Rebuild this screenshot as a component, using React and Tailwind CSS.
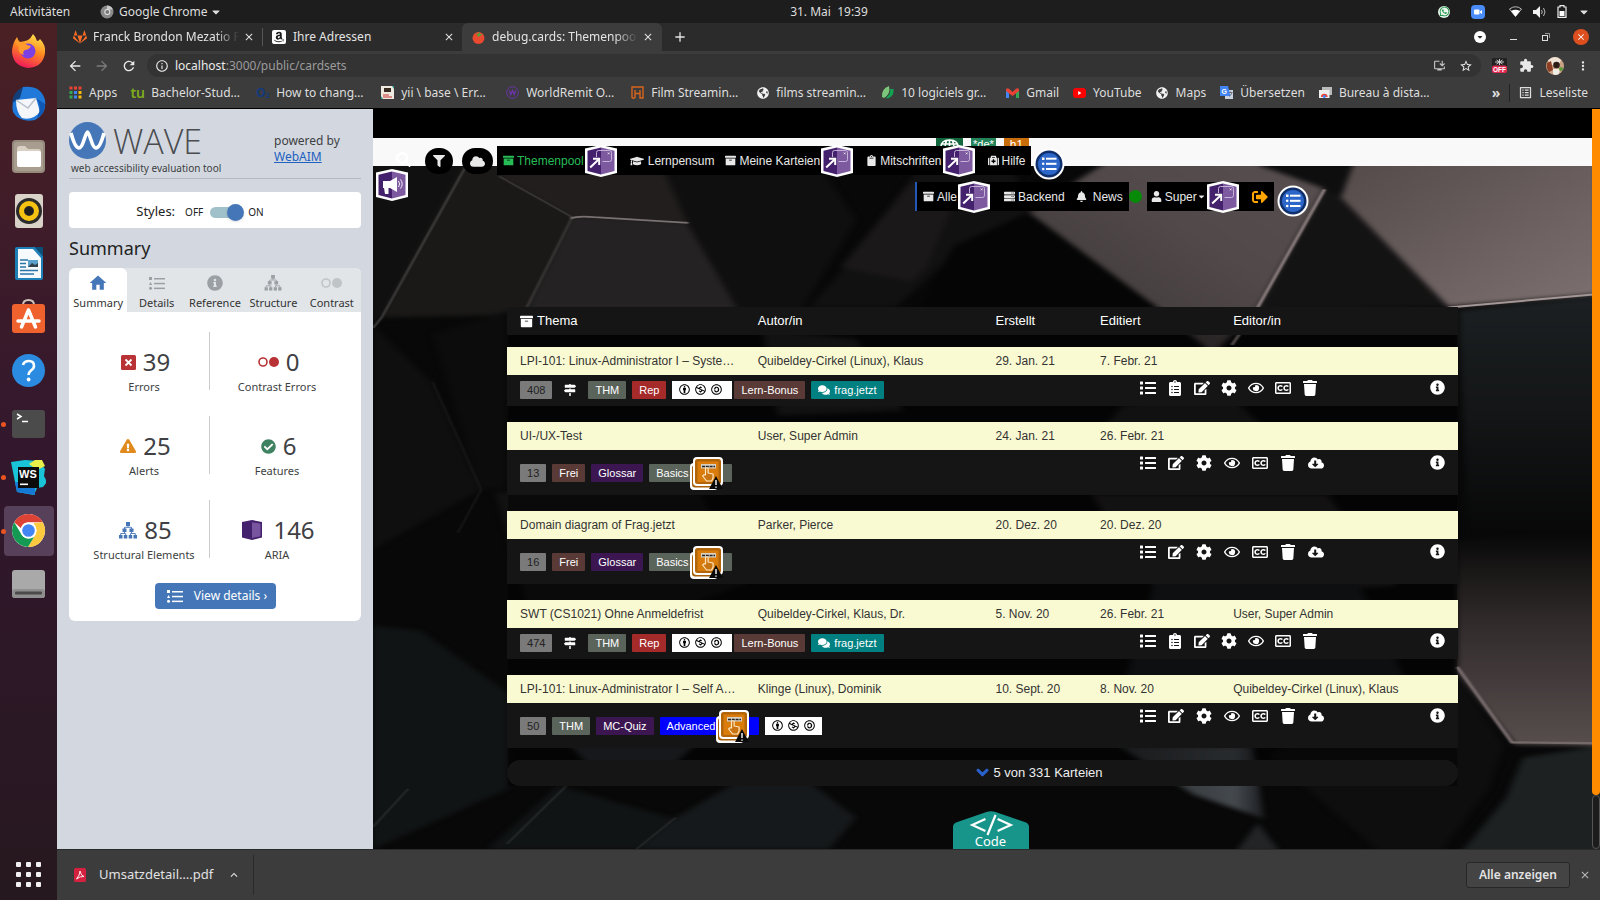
import React from "react";
import {
  FaArchive, FaGraduationCap, FaClipboard, FaMedkit, FaServer, FaBell, FaUser, FaSignOutAlt, FaFilter,
  FaCloud, FaSearch, FaMapSigns, FaComments, FaList, FaClipboardList, FaEdit, FaCog, FaRegEye,
  FaRegClosedCaptioning, FaTrash, FaCloudDownloadAlt, FaInfoCircle, FaChevronDown, FaCreativeCommonsBy,
  FaCreativeCommonsNc, FaCreativeCommonsSa, FaGlobeAmericas, FaCheckCircle, FaExclamationTriangle,
  FaGitlab, FaAmazon, FaWhatsapp, FaCaretDown,
} from "react-icons/fa";
import {
  MdArrowBack, MdArrowForward, MdRefresh, MdInfoOutline, MdStarBorder, MdInstallDesktop, MdExtension,
  MdMoreVert, MdClose, MdAdd, MdKeyboardArrowUp, MdOutlineListAlt, MdHome,
} from "react-icons/md";

/* ---------- shared badges ---------- */

function AriaBadge({ kind = "popup" }) {
  return (
    <svg viewBox="0 0 32 32" className="relative z-10 block size-8 shrink-0" aria-hidden="true">
      <path d="M0 3.500 16 0l16 3.500v24.500l-16 4-16-4z" fill="#fff" />
      <path d="M2.500 5.800 16 2.500v27L2.500 26z" fill="#44216c" />
      <path d="M16 2.500l13.500 3.300V26L16 29.500z" fill="#7d5a9f" />
      {kind === "popup" ? (
        <g fill="none" stroke="#fff">
          <path d="M11.500 12V7.500a2 2 0 0 1 2-2h11a2 2 0 0 1 2 2V14.500a2 2 0 0 1-2 2h-7" stroke="#cdbddf" strokeWidth=".9" />
          <path d="M22.800 7.500l1.800 1.800m0-1.800l-1.800 1.800" strokeWidth=".7" />
          <path d="M5.200 22.500l8.600-8.300" strokeWidth="2" />
          <path d="M8 13.800h6.200V20" strokeWidth="2" />
        </g>
      ) : (
        <g fill="#fff">
          <path d="M7 12h7l7-4v15l-7-4h-1.500v6H9l-1-6H7z" />
          <path d="M22.500 12a5 5 0 0 1 0 6M24.500 10.500a7 7 0 0 1 0 9" fill="none" stroke="#fff" strokeWidth=".9" />
        </g>
      )}
    </svg>
  );
}

function ListBadge() {
  return (
    <svg viewBox="0 0 32 32" className="block size-8 shrink-0" aria-hidden="true">
      <circle cx="16" cy="16" r="15.500" fill="#fff" />
      <circle cx="16" cy="16" r="13.500" fill="#0e2f6b" />
      <circle cx="16" cy="16" r="11" fill="#2b66c8" />
      <g fill="#fff">
        <rect x="9" y="9.500" width="2.500" height="2.500" />
        <circle cx="10.200" cy="15.800" r="1.300" />
        <circle cx="10.200" cy="21" r="1.300" />
        <rect x="13" y="9.700" width="10.500" height="2" />
        <rect x="13" y="14.800" width="10.500" height="2" />
        <rect x="13" y="20" width="10.500" height="2" />
      </g>
    </svg>
  );
}

function EventBadge() {
  return (
    <svg viewBox="0 0 33 34" className="-my-2 block h-[34px] w-[33px] shrink-0" aria-hidden="true">
      <rect x="0" y="7" width="28" height="27" rx="4" fill="#fff" />
      <rect x="2" y="9" width="24" height="22.500" rx="3" fill="#a75f08" />
      <rect x="3" y="1" width="30" height="29" rx="4" fill="#fff" />
      <rect x="5" y="3" width="26" height="25" rx="2.500" fill="#b3650a" />
      <rect x="7.500" y="5.500" width="21" height="20.500" fill="#d97c0c" />
      <rect x="11" y="8" width="15" height="4.500" fill="#d8d0c4" />
      <path d="M12 10.500h13" stroke="#222" strokeWidth="1.600" strokeDasharray="3 .8" />
      <path d="M15.500 19v-6.500q1.500-1.500 2.600 0V17l5 1v4l-1.500 3h-5l-4-5q1-1.600 2.900-1z" fill="#c87412" stroke="#ffe6bf" strokeWidth="1.200" strokeLinejoin="round" />
      <path d="M26 20l7 13H19z" fill="#0a0a0a" />
      <path d="M26 24v5M26 30.500v1.300" stroke="#fff" strokeWidth="1.400" />
    </svg>
  );
}

function ListGlyph({ className }) {
  return (
    <svg viewBox="0 0 16 13" className={className} fill="currentColor" aria-hidden="true">
      <rect x="0" y="0" width="3" height="3" />
      <path d="M1.500 5 3.200 8H0z" />
      <circle cx="1.500" cy="11.300" r="1.500" />
      <rect x="5" y="1" width="11" height="1.500" />
      <rect x="5" y="5.800" width="11" height="1.500" />
      <rect x="5" y="10.600" width="11" height="1.500" />
    </svg>
  );
}

function TreeGlyph({ className }) {
  return (
    <svg viewBox="0 0 18 17" className={className} fill="currentColor" aria-hidden="true">
      <rect x="7" y="0" width="4" height="4" />
      <rect x="3.500" y="6.500" width="4" height="3.500" />
      <rect x="10.500" y="6.500" width="4" height="3.500" />
      <rect x="0" y="13" width="3.500" height="3.500" />
      <rect x="4.800" y="13" width="3.500" height="3.500" />
      <rect x="9.700" y="13" width="3.500" height="3.500" />
      <rect x="14.500" y="13" width="3.500" height="3.500" />
      <path d="M9 4v1.500M5.500 7V5.300h7V7M5.500 10v1.500M12.500 10v1.500M1.700 13v-1.500h5V13M11.500 13v-1.500h4.800V13" fill="none" stroke="currentColor" strokeWidth=".9" />
    </svg>
  );
}

function ContrastGlyph({ className }) {
  return (
    <svg viewBox="0 0 21 10" className={className} aria-hidden="true">
      <circle cx="5" cy="5" r="4" fill="none" stroke="currentColor" strokeWidth="1.600" />
      <circle cx="16" cy="5" r="5" fill="currentColor" />
    </svg>
  );
}

/* ---------- desktop ---------- */

function TopBar() {
  return (
    <header className="relative flex h-[23px] shrink-0 items-center justify-between bg-[#1d1d1d] px-[10px] text-[12px] text-[#dedede]">
      <div className="flex items-center">
        <button type="button" className="w-[90px] text-left">Aktivitäten</button>
        <button type="button" className="flex items-center gap-[5px]">
          <svg viewBox="0 0 14 14" className="size-[14px]" aria-hidden="true">
            <circle cx="7" cy="7" r="6.500" fill="#8a8a8a" />
            <path d="M7 .5a6.500 6.500 0 0 1 6 4H7z" fill="#c9c9c9" />
            <circle cx="7.300" cy="7" r="3" fill="#e8e8e8" />
            <circle cx="7.300" cy="7" r="2" fill="#777" />
          </svg>
          <span className="-mr-[3px]">Google Chrome</span>
          <FaCaretDown className="size-3" />
        </button>
      </div>
      <time className="pointer-events-none absolute inset-x-0 mr-[-58px] text-center whitespace-pre">31. Mai  19:39</time>
      <div className="flex items-center gap-[11px]">
        <span className="mr-[10px] grid size-3 place-items-center rounded-full bg-[#e9f7ec]"><FaWhatsapp className="size-[11px] text-[#128c3e]" /></span>
        <svg viewBox="0 0 14 14" className="mr-[13px] size-[14px]" aria-hidden="true">
          <rect width="14" height="14" rx="4" fill="#4a8cf7" />
          <rect x="3" y="4.500" width="5.500" height="5" rx="1" fill="#fff" />
          <path d="M9 6.500 11 5v4L9 7.700z" fill="#fff" />
        </svg>
        <svg viewBox="0 0 13 11" className="h-[11px] w-[13px]" aria-hidden="true">
          <path d="M.5 3Q6.500-1.500 12.500 3L6.500 10.500z" fill="none" stroke="#bbb" />
          <path d="M2 5q4.500-2.500 9 0L6.500 10.500z" fill="#fff" />
        </svg>
        <svg viewBox="0 0 13 12" className="h-3 w-[13px]" aria-hidden="true">
          <path d="M0 4h3l4-4v12L3 8H0z" fill="#f2f2f2" />
          <path d="M8.500 4q1.500 2 0 4M10.500 2q3 4 0 8" stroke="#bbb" fill="none" />
        </svg>
        <svg viewBox="0 0 10 13" className="h-[13px] w-[10px]" aria-hidden="true">
          <path d="M1 2h2V.7h4V2h2v10.300H1z" fill="none" stroke="#eee" strokeWidth="1.200" />
          <rect x="2.500" y="6" width="5" height="5" fill="#fff" />
        </svg>
        <FaCaretDown className="size-3" />
      </div>
    </header>
  );
}

const dockIcons = {
  Firefox: (
    <>
      <defs>
        <linearGradient id="ff" x1=".7" y1="0" x2=".3" y2="1"><stop offset="0" stopColor="#ffe14d" /><stop offset=".45" stopColor="#ff8a1f" /><stop offset="1" stopColor="#f0135e" /></linearGradient>
      </defs>
      <path d="M22 1q3 3 4 7 2 0 3-2 6 6 5 14-2 14-17 15Q2 33 1 19 1 11 6 4q1 4 3 5 6-1 8-2 3-2 5-6z" fill="url(#ff)" />
      <circle cx="17" cy="18" r="7.500" fill="#7b3fe4" />
      <path d="M4 9q8-1 12 3l4 1q-2 4-6 4-3 2-1 5-7-2-5-8z" fill="#ff9a2e" />
    </>
  ),
  Thunderbird: (
    <>
      <path d="M12 1Q30-1 34 14q2 14-10 20Q8 37 2 26-1 12 12 1z" fill="#2079d8" />
      <path d="M12 1Q2 6 1 17l8-5z" fill="#123f7c" />
      <path d="M5 14l20-2 4 14q-8 9-18 6-6-6-6-18z" fill="#f4f6fa" />
      <path d="M5 14l12 8 8-10" fill="none" stroke="#b7bfcc" strokeWidth="1.500" />
      <path d="M25 12q7 8 1 20 8-4 8-14z" fill="#0f58b5" />
    </>
  ),
  Dateien: (
    <>
      <rect x="1" y="1" width="33" height="33" rx="4" fill="#958a7b" />
      <rect x="3" y="3" width="29" height="29" rx="3" fill="#a89d8e" />
      <path d="M6 10q0-3 3-3h5l3 3h10q3 0 3 3v13q0 2-2 2H8q-2 0-2-2z" fill="#d9d0c3" />
      <rect x="6" y="12" width="24" height="16" rx="2" fill="#fff" />
    </>
  ),
  Rhythmbox: (
    <>
      <rect x="4" y="1" width="28" height="34" rx="3" fill="#d8d2c8" />
      <circle cx="18" cy="18" r="13" fill="#2b2b2b" />
      <circle cx="18" cy="18" r="7.500" fill="none" stroke="#f5c211" strokeWidth="5" />
      <circle cx="18" cy="18" r="4" fill="#1e1e1e" />
    </>
  ),
  "LibreOffice Writer": (
    <>
      <path d="M6 1h18l8 9v22q0 2-2 2H6q-2 0-2-2V3q0-2 2-2z" fill="#1d7fb8" />
      <path d="M7 3h15l8 9v20H7z" fill="#f6fafc" />
      <path d="M24 1h8v9z" fill="#0b4f78" />
      <path d="M9 14h8M9 17.500h6M9 21h6M9 24.500h18M9 28h14" stroke="#2a76a8" strokeWidth="1.600" />
      <rect x="17" y="14" width="10" height="7" fill="#5aa1cb" />
      <path d="M17 21l4-4 3 2 3-2v4z" fill="#32424d" />
    </>
  ),
  "Ubuntu Software": (
    <>
      <path d="M12 6q0-5 5.500-5T23 6" fill="none" stroke="#cfc4bc" strokeWidth="2" />
      <rect x="1" y="5" width="33" height="29" rx="3" fill="#f0622d" />
      <path d="M17.500 11l-7 17M17.500 11l7 17M7 22h21" stroke="#fff" strokeWidth="3.500" fill="none" strokeLinecap="round" />
    </>
  ),
  Hilfe: (
    <>
      <circle cx="17.500" cy="17.500" r="16.500" fill="#2b8be0" />
      <path d="M12 12q1-4 6-4t5 5q0 2.500-3 4.500-2.500 2-2.500 4.500" fill="none" stroke="#fff" strokeWidth="2.600" />
      <circle cx="17.600" cy="26.500" r="1.900" fill="#fff" />
    </>
  ),
  Terminal: (
    <>
      <rect x="1" y="4" width="33" height="28" rx="3" fill="#4b4b4b" />
      <path d="M6 8l4 2.500L6 13M11 15.500h6" fill="none" stroke="#fff" strokeWidth="1.500" />
    </>
  ),
  WebStorm: (
    <>
      <path d="M0 2 14 0l14 1 6 8-1 7 3 6-4 5-6 1-3 7-17-3z" fill="#19c3d8" />
      <path d="M18 4 24 0h7l3 6-8 4z" fill="#e9f04a" />
      <path d="M4 22h20v13l-18-3z" fill="#1779d6" />
      <rect x="7" y="7" width="21" height="21" fill="#0c0c0c" />
      <text x="8" y="17.500" fontSize="11" fontWeight="700" fill="#fff" fontFamily="Liberation Sans, sans-serif">WS</text>
      <rect x="9" y="23.500" width="8" height="1.600" fill="#fff" />
    </>
  ),
  "Google Chrome": (
    <>
      <circle cx="17.500" cy="17.500" r="16.500" fill="#fff" />
      <path d="M3.200 9.300A16.500 16.500 0 0 1 31.800 9.300H17.500a8 8 0 0 0-7.500 6z" fill="#dd4335" />
      <path d="M31.800 9.300A16.500 16.500 0 0 1 17 34l7.500-12.500q2.500-6-2-11.500z" fill="#fdc93f" />
      <path d="M3.200 9.300A16.500 16.500 0 0 0 17 34l6-10q-8 4-12.500-2.500z" fill="#159a54" />
      <circle cx="17.500" cy="17.500" r="8" fill="#fff" />
      <circle cx="17.500" cy="17.500" r="6.300" fill="#4285f4" />
    </>
  ),
  Laufwerk: (
    <>
      <rect x="1" y="4" width="33" height="28" rx="3" fill="#a9a9a9" />
      <rect x="1" y="23" width="33" height="9" rx="3" fill="#8f8f8f" />
      <rect x="4" y="25.500" width="27" height="3" rx="1" fill="#4a4a4a" />
    </>
  ),
};

function Dock() {
  const running = ["Terminal", "WebStorm", "Google Chrome"];
  return (
    <nav aria-label="Dock" className="flex w-[57px] shrink-0 flex-col items-center justify-between bg-gradient-to-b from-[#4a2024] via-[#32172d] to-[#26181f] pt-[2px] pb-2">
      <ul className="flex h-[584px] flex-col justify-between">
        {Object.entries(dockIcons).map(([name, art]) => (
          <li key={name} className="relative">
            {running.includes(name) && <span className="absolute top-[23px] left-0 size-[5px] rounded-full bg-[#e95420]" />}
            <button type="button" aria-label={name} className={name === "Google Chrome" ? "mx-[3px] grid size-[50px] place-items-center rounded bg-[#57405a]" : "mx-[3px] grid size-[50px] place-items-center rounded"}>
              <svg viewBox="0 0 35 35" className="size-[35px]" aria-hidden="true">{art}</svg>
            </button>
          </li>
        ))}
      </ul>
      <button type="button" aria-label="Anwendungen anzeigen" className="grid size-9 grid-cols-3 place-items-center p-[3px]">
        {Array.from({ length: 9 }, (_, i) => <span key={i} className="size-[5px] rounded-[1px] bg-[#f3f0f2]" />)}
      </button>
    </nav>
  );
}

/* ---------- browser chrome ---------- */

function TabStrip() {
  return (
    <div className="flex h-7 shrink-0 items-center bg-[#2b2b2b] text-[12px] text-[#e3e3e3]">
      <div className="flex w-[206px] items-center border-r border-[#565656] pr-[7px] pl-4">
        <FaGitlab className="mr-[6px] size-[14px] shrink-0 text-[#fc6d26]" />
        <span className="mr-1 min-w-0 flex-1 overflow-hidden whitespace-nowrap [mask-image:linear-gradient(to_right,#000_84%,transparent)]">Franck Brondon Mezatio F</span>
        <button type="button" aria-label="Tab schließen"><MdClose className="size-3" /></button>
      </div>
      <div className="flex w-[199px] items-center pr-[7px] pl-[9px]">
        <span className="mr-[7px] grid size-[14px] place-items-center rounded-[2px] bg-white"><FaAmazon className="size-3 text-[#1b1b1b]" /></span>
        <span className="flex-1">Ihre Adressen</span>
        <button type="button" aria-label="Tab schließen"><MdClose className="size-3" /></button>
      </div>
      <div className="flex h-full w-[200px] items-center rounded-t-[6px] bg-[#3c3c3c] pr-2 pl-[10px]">
        <svg viewBox="0 0 13 13" className="mr-[7px] size-[13px] shrink-0" aria-hidden="true">
          <circle cx="6.500" cy="7" r="6" fill="#e8492f" />
          <path d="M3 2.500l3 .5L7.500.500 8 3l3 .5-3 1.200L6 6 5.500 4z" fill="#4fa33a" />
        </svg>
        <span className="mr-1 min-w-0 flex-1 overflow-hidden whitespace-nowrap [mask-image:linear-gradient(to_right,#000_84%,transparent)]">debug.cards: Themenpoo</span>
        <button type="button" aria-label="Tab schließen"><MdClose className="size-3" /></button>
      </div>
      <button type="button" aria-label="Neuer Tab" className="ml-[10px]"><MdAdd className="size-4" /></button>
      <div className="ml-auto flex items-center gap-[21px] pr-[11px]">
        <button type="button" aria-label="Tabs suchen" className="grid size-3 place-items-center rounded-full bg-white text-[#2b2b2b]"><FaCaretDown className="size-2" /></button>
        <button type="button" aria-label="Minimieren" className="grid size-3 place-items-center"><span className="mt-1 h-px w-[7px] bg-[#ddd]" /></button>
        <button type="button" aria-label="Wiederherstellen">
          <svg viewBox="0 0 12 12" className="size-3" fill="none" stroke="#ddd" aria-hidden="true"><rect x="2.500" y="4.500" width="5" height="5" /><path d="M5 2.500h4.500V7" stroke="#999" /></svg>
        </button>
        <button type="button" aria-label="Fenster schließen" className="grid size-4 place-items-center rounded-full bg-[#dd4f1e] text-white"><MdClose className="size-[10px]" /></button>
      </div>
    </div>
  );
}

function Toolbar() {
  return (
    <div className="flex h-[26px] shrink-0 items-center bg-[#3c3c3c] pt-[3px] text-[#e8e8e8]">
      <div className="flex w-[90px] items-center gap-[11px] pl-[10px]">
        <button type="button" aria-label="Zurück"><MdArrowBack className="size-4" /></button>
        <button type="button" aria-label="Vorwärts"><MdArrowForward className="size-4 text-[#7b7b7b]" /></button>
        <button type="button" aria-label="Neu laden"><MdRefresh className="size-4" /></button>
      </div>
      <div className="flex h-[23px] flex-1 items-center rounded-full bg-[#333] px-2 text-[12px]">
        <MdInfoOutline className="mr-[6px] size-[14px]" />
        <span className="flex-1 text-[#9b9b9b]"><span className="text-[#ececec]">localhost</span>:3000/public/cardsets</span>
        <button type="button" aria-label="App installieren" className="mr-[13px]"><MdInstallDesktop className="size-[13px] text-[#c8c8c8]" /></button>
        <button type="button" aria-label="Lesezeichen"><MdStarBorder className="size-[14px]" /></button>
      </div>
      <div className="flex items-center gap-[12px] pr-[10px] pl-[11px]">
        <button type="button" aria-label="Erweiterung aus">
          <svg viewBox="0 0 15 15" className="size-[15px]" aria-hidden="true">
            <rect width="15" height="9" rx="1" fill="#222" />
            <path d="M7.500 1v6M4.500 2l6 4M10.500 2l-6 4M3 4h9" stroke="#ddd" strokeWidth=".9" />
            <rect y="7.500" width="15" height="7.500" rx="2" fill="#e22a53" />
            <text x="7.500" y="13.600" textAnchor="middle" fontSize="6.500" fontWeight="700" fill="#fff" fontFamily="Liberation Sans, sans-serif">OFF</text>
          </svg>
        </button>
        <button type="button" aria-label="Erweiterungen"><MdExtension className="size-[15px]" /></button>
        <button type="button" aria-label="Profil">
          <svg viewBox="0 0 18 18" className="size-[18px]" aria-hidden="true">
            <circle cx="9" cy="9" r="9" fill="#c9a184" />
            <path d="M2 3.500Q9-3 15 3l-2 5H5z" fill="#efe3d6" />
            <path d="M1 6l4-2 2 9-4 2Q0 11 1 6z" fill="#8d3f26" />
            <circle cx="10.500" cy="8" r="3.300" fill="#2b1d18" />
            <path d="M7 12h7l-1 5q-4 2-6 0z" fill="#f0ece6" />
            <circle cx="15" cy="12" r="2" fill="#5c9a3c" />
          </svg>
        </button>
        <button type="button" aria-label="Menü"><MdMoreVert className="size-[14px]" /></button>
      </div>
    </div>
  );
}

const bookmarks = [
  { label: "Apps", icon: (
    <svg viewBox="0 0 13 13" className="size-[13px]" aria-hidden="true">
      {["#ea4335", "#ea4335", "#ea4335", "#34a853", "#4285f4", "#fbbc04", "#34a853", "#4285f4", "#fbbc04"].map((c, i) => (
        <rect key={i} x={(i % 3) * 4.500 + 0.500} y={Math.floor(i / 3) * 4.500 + 0.500} width="3" height="3" fill={c} />
      ))}
    </svg>
  ) },
  { label: "Bachelor-Stud…", wide: true, icon: <span className="text-[14px] leading-none font-semibold text-[#7fae1b]">tu</span> },
  { label: "How to chang…", wide: true, icon: <span className="text-[12px] leading-none font-bold text-[#123a7c]">O<sub className="text-[7px]">2</sub></span> },
  { label: "yii \\ base \\ Err…", wide: true, icon: (
    <svg viewBox="0 0 13 13" className="size-[13px]" aria-hidden="true"><rect width="13" height="13" fill="#efe9e0" /><path d="M3 2h7v4H3z" fill="#3a2b22" /><path d="M2 9h6M2 11h9" stroke="#c33" /><path d="M11 0h2v3zM0 10v3h2z" fill="#2a9d8f" /></svg>
  ) },
  { label: "WorldRemit O…", wide: true, icon: (
    <svg viewBox="0 0 13 13" className="size-[13px]" fill="none" stroke="#6a35a8" aria-hidden="true"><circle cx="6.500" cy="6.500" r="5.800" /><path d="M3.500 4.500l1.300 4 1.700-4 1.700 4 1.300-4" strokeWidth="1.400" /></svg>
  ) },
  { label: "Film Streamin…", wide: true, icon: (
    <svg viewBox="0 0 13 13" className="size-[13px]" fill="none" stroke="#d8641c" strokeWidth="1.400" aria-hidden="true"><path d="M1 12V1h11v11H9V4M4 12V4M4 7.500h5M1 12h3" /></svg>
  ) },
  { label: "films streamin…", wide: true, icon: <FaGlobeAmericas className="size-3 text-[#f2f2f2]" /> },
  { label: "10 logiciels gr…", wide: true, icon: (
    <svg viewBox="0 0 13 13" className="size-[13px]" aria-hidden="true"><path d="M1 11Q0 3 8 0q2 8-5 12z" fill="#7bc67a" /><path d="M12.500 3q1 9-8 9.500Q10 8 9 3z" fill="#12a150" /></svg>
  ) },
  { label: "Gmail", icon: (
    <svg viewBox="0 0 13 10" className="h-[10px] w-[13px]" aria-hidden="true"><path d="M0 1h3v9H0z" fill="#4285f4" /><path d="M10 1h3v9h-3z" fill="#34a853" /><path d="M0 1.500Q1-.5 3 .8L6.500 4 10 .800Q12-.5 13 1.500V3L6.500 8 0 3z" fill="#ea4335" /></svg>
  ) },
  { label: "YouTube", icon: (
    <svg viewBox="0 0 13 10" className="h-[10px] w-[13px]" aria-hidden="true"><rect width="13" height="10" rx="3" fill="#f00" /><path d="M5.200 3v4l3.200-2z" fill="#fff" /></svg>
  ) },
  { label: "Maps", icon: <FaGlobeAmericas className="size-3 text-[#f2f2f2]" /> },
  { label: "Übersetzen", icon: (
    <svg viewBox="0 0 13 13" className="size-[13px]" aria-hidden="true"><rect x="5" y="4" width="8" height="9" fill="#c9d3e0" /><path d="M0 0h8l2.500 10H0z" fill="#4285f4" /><text x="1.500" y="7.500" fontSize="7" fontWeight="700" fill="#fff" fontFamily="Liberation Sans, sans-serif">G</text><path d="M9 6.500h3.500M10.500 5.500v1M12 6.500q-1 3-3 4" stroke="#556" fill="none" strokeWidth=".7" /></svg>
  ) },
  { label: "Bureau à dista…", wide: true, icon: (
    <svg viewBox="0 0 13 13" className="size-[13px]" aria-hidden="true"><rect x="3" y="1" width="10" height="8" fill="#bbb" /><rect x="0" y="4" width="10.500" height="8" fill="#eee" /><path d="M2 11a3.300 3.300 0 0 1 6.600 0z" fill="#ea4335" /><circle cx="5.300" cy="10.500" r="1.500" fill="#4285f4" /></svg>
  ) },
];

function BookmarkBar() {
  return (
    <div className="flex h-8 shrink-0 items-center border-b border-black bg-[#3c3c3c] pl-3 text-[12px] text-[#dedede]">
      <ul className="flex min-w-0 items-center gap-[14px]">
        {bookmarks.map((b) => (
          <li key={b.label}>
            <a href="#top" className="flex items-center gap-[7px] whitespace-nowrap">
              <span className="flex w-[13px] items-center justify-center">{b.icon}</span>
              <span className={b.wide ? "w-[91px]" : ""}>{b.label}</span>
            </a>
          </li>
        ))}
      </ul>
      <div className="ml-auto flex items-center pr-3">
        <button type="button" aria-label="Weitere Lesezeichen" className="mr-[9px] text-[14px] leading-none font-bold">»</button>
        <button type="button" className="flex items-center gap-[6px] border-l border-[#222] pl-2"><MdOutlineListAlt className="size-[15px]" />Leseliste</button>
      </div>
    </div>
  );
}

/* ---------- WAVE sidebar ---------- */

const waveTabs = [
  { label: "Summary", icon: <MdHome className="size-5 text-[#4577b8]" /> },
  { label: "Details", icon: <ListGlyph className="h-[13px] w-4" /> },
  { label: "Reference", icon: <FaInfoCircle className="size-4" /> },
  { label: "Structure", icon: <TreeGlyph className="h-4 w-[18px]" /> },
  { label: "Contrast", icon: <ContrastGlyph className="h-[10px] w-[21px] text-[#bfc4c6]" /> },
];

const waveStats = [
  { value: 39, label: "Errors", icon: (
    <svg viewBox="0 0 15 15" className="size-[15px]" aria-hidden="true"><rect width="15" height="15" rx="1.500" fill="#b93235" /><path d="M4.500 4.500l6 6m0-6l-6 6" stroke="#fff" strokeWidth="1.800" /></svg>
  ) },
  { value: 0, label: "Contrast Errors", icon: <ContrastGlyph className="h-[10px] w-[21px] text-[#b93235]" /> },
  { value: 25, label: "Alerts", icon: <FaExclamationTriangle className="size-4 text-[#e08a1e]" /> },
  { value: 6, label: "Features", icon: <FaCheckCircle className="size-[15px] text-[#3f8262]" /> },
  { value: 85, label: "Structural Elements", icon: <TreeGlyph className="h-[17px] w-[18px] text-[#4577b8]" /> },
  { value: 146, label: "ARIA", icon: (
    <svg viewBox="0 0 20 20" className="mr-[4px] size-5" aria-hidden="true"><path d="M0 2 10 0l10 2v15.500L10 20 0 17.500z" fill="#44216c" /><path d="M10 2.200l8.500 1.500v12.500L10 18z" fill="#7a559f" /></svg>
  ) },
];

function WaveSidebar() {
  return (
    <aside className="w-[316px] shrink-0 bg-[#d3d8e0] px-3 font-['Noto_Sans','Open_Sans',sans-serif] text-[#3d3f42]">
      <div className="flex h-[70px] border-b border-[#b5bac3] pt-3">
        <div className="w-[205px]">
          <div className="flex h-[38px] items-center gap-[7px]">
            <svg viewBox="0 0 37 37" className="size-[37px]" aria-hidden="true">
              <circle cx="18.500" cy="18.500" r="18.500" fill="#4577b8" />
              <path d="M2 11q4 15 8 15 2.500 0 5-8t3.500-8 3.500 8 5 8q4 0 8-15" fill="none" stroke="#fff" strokeWidth="3.600" />
            </svg>
            <span className="pt-[2px] font-['Open_Sans'] text-[34px] leading-[38px] font-light text-[#4a4c4f]">WAVE</span>
          </div>
          <p className="pt-px pl-[2px] text-[10px] leading-4 whitespace-nowrap">web accessibility evaluation tool</p>
        </div>
        <p className="pt-3 text-[12px] leading-4">powered by<br /><a href="#webaim" className="text-[#2060bf] underline">WebAIM</a></p>
      </div>

      <div className="mt-[13px] flex h-9 items-center justify-center rounded bg-white pt-1 pr-[30px] text-[13px] text-[#222]">
        <label htmlFor="styles" className="mr-[10px]">Styles:</label>
        <span className="mr-[7px] text-[10px]">OFF</span>
        <span className="relative mr-1 h-[17px] w-[34px]">
          <input id="styles" type="checkbox" defaultChecked className="peer absolute inset-0 z-10 size-full cursor-pointer opacity-0" />
          <span className="absolute top-[3px] left-0 h-[11px] w-[30px] rounded-full bg-[#a0c0ca]" />
          <span className="absolute top-0 right-0 size-[17px] rounded-full bg-[#4577b8] shadow" />
        </span>
        <span className="text-[10px]">ON</span>
      </div>

      <h2 className="mt-[6px] text-[18px] leading-7 text-[#222]">Summary</h2>

      <section className="mt-[6px] overflow-hidden rounded-md bg-white pb-3">
        <div role="tablist" className="grid h-11 grid-cols-5 bg-[#e1e5e8] text-[11px] text-[#333]">
          {waveTabs.map((t, i) => (
            <button key={t.label} type="button" role="tab" aria-selected={i === 0} className={i === 0 ? "flex flex-col items-center rounded-t-md bg-white pt-[5px]" : "flex flex-col items-center pt-[5px]"}>
              <span className="flex h-5 items-center text-[#9aa0a3]">{t.icon}</span>
              <span className="leading-[19px] whitespace-nowrap">{t.label}</span>
            </button>
          ))}
        </div>
        <ul className="mt-5 mr-4 ml-[10px] grid grid-cols-[130px_1fr] gap-y-[26px]">
          {waveStats.map((s, i) => (
            <li key={s.label} className={i % 2 ? "flex h-[58px] flex-col items-center pt-4" : "flex h-[58px] flex-col items-center pt-4 shadow-[1px_0_0_#c9cbce]"}>
              <span className="flex h-7 items-center gap-[7px] pl-[3px] text-[24px] leading-7 text-[#3f4144]">{s.icon}{s.value}</span>
              <span className="mt-[3px] text-[11px] leading-4 whitespace-nowrap">{s.label}</span>
            </li>
          ))}
        </ul>
        <button type="button" className="mx-auto mt-[25px] flex h-[26px] w-[121px] items-center justify-center gap-[11px] rounded bg-[#4577b8] pl-1 text-[12px] whitespace-nowrap text-white">
          <ListGlyph className="h-[13px] w-4" />View details ›
        </button>
      </section>
    </aside>
  );
}

/* ---------- cards page ---------- */

function Backdrop() {
  return (
    <svg viewBox="4 19 1554 1547" preserveAspectRatio="none" className="absolute inset-0 size-full" aria-hidden="true">
      <defs>
        <linearGradient id="brown" x1="0" y1="1" x2="1" y2="0"><stop offset="0" stopColor="#3a3435" /><stop offset=".6" stopColor="#51494a" /><stop offset="1" stopColor="#574e4f" /></linearGradient>
        <linearGradient id="rose" x1="0" y1="0" x2="1" y2="1"><stop offset="0" stopColor="#544a4a" /><stop offset="1" stopColor="#7d7070" /></linearGradient>
        <linearGradient id="slate" x1="0" y1="0" x2="0" y2="1"><stop offset="0" stopColor="#1c2022" /><stop offset=".5" stopColor="#131516" /><stop offset="1" stopColor="#070707" /></linearGradient>
        <linearGradient id="lower" x1="0" y1="0" x2="0" y2="1"><stop offset="0" stopColor="#070707" /><stop offset=".4" stopColor="#2f2929" /><stop offset="1" stopColor="#584e4e" /></linearGradient>
        <linearGradient id="steel" x1="0" y1="0" x2="1" y2="0"><stop offset="0" stopColor="#2a2d30" /><stop offset=".8" stopColor="#44494d" /><stop offset="1" stopColor="#1c1e21" /></linearGradient>
        <filter id="soft" x="-5%" y="-5%" width="110%" height="110%" colorInterpolationFilters="sRGB"><feGaussianBlur stdDeviation="4" /></filter>
        <filter id="edge" x="-5%" y="-5%" width="110%" height="110%" colorInterpolationFilters="sRGB"><feGaussianBlur stdDeviation="1.400" /></filter>
      </defs>
      <rect x="4" y="19" width="1554" height="1547" fill="#080808" />
      <g filter="url(#soft)">
        <path d="M0 130H122L18 452 0 470z" fill="#101010" />
        <path d="M122 130h40l3 30 93 85-58 195-40 10-145 5z" fill="#1a1918" />
        <path d="M160 130h210l36 128-148-13-93-85z" fill="#211e1d" />
        <path d="M258 245l147 13 65 182H200z" fill="#242223" />
        <path d="M370 130h200l50 120-70 190h-80l-65-182z" fill="#100f0f" />
        <path d="M700 140h120l20 95-110 110-60 89H560l60-110z" fill="#121111" />
        <path d="M690 170l50 60-30 120-20 30-90-30z" fill="#1a1818" />
        <path d="M840 235l-95 70-45 129h320z" fill="#050505" />
        <path d="M840 235l70-75 30-30h190l87 55-87 255-55 90-70-95z" fill="url(#brown)" />
        <path d="M1130 135h130l-22 65-21-15z" fill="#0e0e0e" />
        <path d="M1217 187l23 13 135 232-245 10z" fill="#141313" />
        <path d="M1255 130h310v276l-190 26-137-228z" fill="url(#rose)" />
        <path d="M1388 440l180-32v520h-168z" fill="url(#slate)" />
        <path d="M1386 920l182-20v450l-108-3-74-150z" fill="url(#lower)" />
        <path d="M1470 1375l98-25v230h-180l60-120z" fill="#1d2122" />
        <path d="M1386 1200l60 150-20 90-60 130h-80l-140-200z" fill="#0e0e0e" />
        <path d="M920 825h300l90 190-300 30z" fill="#211e1e" />
        <path d="M960 640l130-30 60 90-240 30z" fill="#1f1d1d" />
        <path d="M1000 1010h260l60 200-360 20z" fill="#16191c" />
        <path d="M4 470l75 120 62 225L4 940z" fill="#0f0f10" />
        <path d="M80 490l95-50v370l-35 5z" fill="#0c0c0c" />
        <path d="M4 1100l60 10 112 130v200L4 1566z" fill="#111415" />
        <path d="M160 820h260l60 190-260 160z" fill="#121213" />
        <path d="M500 480l120 20 60 150-160 10z" fill="#201e1e" />
        <path d="M250 1340h170l-40 60H285z" fill="#26292d" />
        <path d="M240 1434l150 70-35 62H150z" fill="#111415" />
        <path d="M390 1500l85-80h80l65 80-35 66H345z" fill="#16191b" />
        <path d="M955 1350h170l15 152-90-50z" fill="url(#steel)" />
        <path d="M1132 1512l28 60h-56z" fill="#222426" />
      </g>
      <g fill="none" strokeWidth="2" filter="url(#edge)">
        <path d="M122 140 15 455l-11 22" stroke="#5a5656" />
        <path d="M165 160l93 85M200 434l58-189" stroke="#4a4545" />
        <path d="M256 248q8-6 30-3l120 12" stroke="#7a7272" strokeWidth="4" />
        <path d="M1217 187l-88 255-30 70" stroke="#8f8181" strokeWidth="4" />
        <path d="M1375 434l190-28" stroke="#a49797" strokeWidth="4" />
        <path d="M1386 1185l70 158 108 2" stroke="#75696a" strokeWidth="5" />
        <path d="M4 1520l45-80M175 1555l75-120M390 1500l-50 66" stroke="#303334" />
        <path d="M80 590l62 225-30 90" stroke="#1d1d1d" />
      </g>
      <rect x="176" y="434" width="1210" height="1000" fill="#000" opacity=".4" />
    </svg>
  );
}

const navIcon = "h-[11px] w-auto shrink-0";

function NavItem({ icon, children, active, badge, className = "" }) {
  return (
    <li className={`flex items-center ${className}`}>
      <a href="#nav" className={active ? "flex items-center gap-[3px] text-[#27bd56]" : "flex items-center gap-[3px]"}>{icon}{children}</a>
      {badge && <span className="-my-1 ml-px block"><AriaBadge /></span>}
    </li>
  );
}

function PageHeader() {
  return (
    <header className="relative text-[12px] whitespace-nowrap text-[#e8e8e8]">
      <div className="h-[29px] bg-black" />
      <div className="relative flex h-7 items-start bg-[#f9f9f9] pt-2">
        <div className="absolute top-0 left-[563px] flex gap-2 text-white" aria-hidden="true">
          <svg viewBox="0 0 27 14" className="h-[14px] w-[27px]"><rect width="27" height="14" fill="#12683c" /><path d="M5 9q0-7 8.500-7T22 9M13.500 2v10M9 10q0-5 2-8M18 10q0-5-2-8M5 6h17" fill="none" stroke="#fff" strokeWidth="1.600" /></svg>
          <span className="h-[14px] bg-[#25835a] px-[2px] text-[11px] leading-[12px]">*de*</span>
          <span className="h-[14px] bg-[#c96d0a] px-[6px] text-[12px] leading-[14px]">h1</span>
        </div>
        <button type="button" aria-label="Suche" className="mt-[6px] ml-[23px]"><FaSearch className="size-[15px] text-white" /></button>
        <button type="button" aria-label="Filter" className="relative mt-[2px] ml-[14px] grid h-[26px] w-7 place-items-center rounded-full bg-black"><FaFilter className="size-3" /></button>
        <button type="button" aria-label="Wortwolke" className="relative mt-[2px] ml-[9px] grid h-[26px] w-[31px] place-items-center rounded-full bg-black"><FaCloud className="size-[15px]" /></button>
        <nav className="relative ml-1 h-[29px] bg-black">
          <ul className="flex h-full items-center pr-[5px] pl-[6px]">
            <NavItem active badge icon={<FaArchive className={navIcon} />}>Themenpool</NavItem>
            <NavItem className="ml-[13px]" icon={<FaGraduationCap className="mr-px h-3 w-[14px] shrink-0" />}>Lernpensum</NavItem>
            <NavItem className="ml-[11px]" badge icon={<FaArchive className={navIcon} />}>Meine Karteien</NavItem>
            <NavItem className="ml-[13px]" badge icon={<FaClipboard className={navIcon} />}>Mitschriften</NavItem>
            <NavItem className="ml-[13px]" icon={<FaMedkit className={navIcon} />}>Hilfe</NavItem>
          </ul>
        </nav>
        <span className="relative mt-[2px] ml-[2px]"><ListBadge /></span>
      </div>
      <div className="flex items-start">
        <span className="mt-[3px] ml-[3px]"><AriaBadge kind="horn" /></span>
        <div className="mt-4 ml-[507px] flex items-start">
          <nav className="h-[29px] border-l-2 border-[#2458b8] bg-black">
            <ul className="flex h-full items-center pr-[6px] pl-[6px]">
              <NavItem badge icon={<FaArchive className={navIcon} />}>Alle</NavItem>
              <NavItem className="ml-[14px]" icon={<FaServer className={navIcon} />}>Backend</NavItem>
              <NavItem className="ml-[11px]" icon={<FaBell className={`${navIcon} mr-[3px]`} />}>News</NavItem>
            </ul>
          </nav>
          <span className="mt-2 size-[13px] rounded-full bg-[#078a07]" />
          <nav className="ml-[5px] h-[29px] bg-black">
            <ul className="flex h-full items-center pr-[6px] pl-1">
              <NavItem badge icon={<FaUser className={navIcon} />}>Super<FaCaretDown className="-ml-[3px] size-[9px]" /></NavItem>
              <li className="ml-[13px]"><button type="button" aria-label="Abmelden" className="block"><FaSignOutAlt className="size-4 text-[#ffa500]" /></button></li>
            </ul>
          </nav>
          <span className="mt-[3px] ml-[3px]"><ListBadge /></span>
        </div>
      </div>
    </header>
  );
}

const tagStyles = {
  count: "bg-[#7a7a7a] text-[#222]",
  olive: "bg-[#5b645b] text-white",
  red: "bg-[#a52a2a] text-white",
  brown: "bg-[#5a3a36] text-white",
  purple: "bg-[#3b1650] text-white",
  teal: "bg-[#008080] text-white",
  blue: "bg-[#0000ff] text-white",
};

function Tag({ tone, children }) {
  return <span className={`flex h-[18px] items-center rounded-[1px] px-[7px] text-[11px] leading-[18px] ${tagStyles[tone]}`}>{children}</span>;
}

function License({ wide }) {
  return (
    <span className={wide ? "-mr-1 flex h-[18px] w-[60px] items-center gap-[5px] bg-white px-[7px] text-black" : "flex h-[18px] items-center gap-[5px] bg-white px-[7px] text-black"}>
      <FaCreativeCommonsBy className="size-[11px]" /><FaCreativeCommonsNc className="size-[11px]" /><FaCreativeCommonsSa className="size-[11px]" />
    </span>
  );
}

function BonusTags({ count }) {
  return (
    <>
      <Tag tone="count">{count}</Tag>
      <FaMapSigns className="mx-[6px] size-3 text-white" />
      <Tag tone="olive">THM</Tag>
      <Tag tone="red">Rep</Tag>
      <License wide />
      <Tag tone="brown">Lern-Bonus</Tag>
      <Tag tone="teal"><FaComments className="mr-1 h-3 w-auto" />frag.jetzt</Tag>
    </>
  );
}

function FreeTags({ count }) {
  return (
    <>
      <Tag tone="count">{count}</Tag>
      <Tag tone="brown">Frei</Tag>
      <Tag tone="purple">Glossar</Tag>
      <Tag tone="olive"><span className="mr-px">Basics</span><EventBadge /><span className="w-[2px]" /></Tag>
    </>
  );
}

const rows = [
  { cells: ["LPI-101: Linux-Administrator I – Syste…", "Quibeldey-Cirkel (Linux), Klaus", "29. Jan. 21", "7. Febr. 21", ""], tags: <BonusTags count={408} />, bonus: true },
  { cells: ["UI-/UX-Test", "User, Super Admin", "24. Jan. 21", "26. Febr. 21", ""], tags: <FreeTags count={13} /> },
  { cells: ["Domain diagram of Frag.jetzt", "Parker, Pierce", "20. Dez. 20", "20. Dez. 20", ""], tags: <FreeTags count={16} /> },
  { cells: ["SWT (CS1021) Ohne Anmeldefrist", "Quibeldey-Cirkel, Klaus, Dr.", "5. Nov. 20", "26. Febr. 21", "User, Super Admin"], tags: <BonusTags count={474} />, bonus: true },
  { cells: ["LPI-101: Linux-Administrator I – Self A…", "Klinge (Linux), Dominik", "10. Sept. 20", "8. Nov. 20", "Quibeldey-Cirkel (Linux), Klaus"], tags: (
    <>
      <Tag tone="count">50</Tag>
      <Tag tone="olive">THM</Tag>
      <Tag tone="purple">MC-Quiz</Tag>
      <Tag tone="blue"><span className="mr-px">Advanced</span><EventBadge /><span className="w-[3px]" /></Tag>
      <License />
    </>
  ) },
];

function Actions({ bonus }) {
  const list = [
    ["Liste", FaList], bonus && ["Bericht", FaClipboardList], ["Bearbeiten", FaEdit], ["Einstellungen", FaCog],
    ["Ansehen", FaRegEye], ["Lizenz", FaRegClosedCaptioning], ["Löschen", FaTrash], !bonus && ["Herunterladen", FaCloudDownloadAlt],
  ].filter(Boolean);
  return (
    <div className={bonus ? "flex gap-[11px]" : "flex gap-3"}>
      {list.map(([label, Icon]) => (
        <button key={label} type="button" aria-label={label}><Icon className="h-4 w-auto" /></button>
      ))}
    </div>
  );
}

function CardsTable() {
  return (
    <table className="w-full table-fixed border-collapse text-left whitespace-nowrap">
      <colgroup>
        <col className="w-[25%]" /><col className="w-[25%]" /><col className="w-[11%]" /><col className="w-[14%]" /><col className="w-[25%]" />
      </colgroup>
      <thead>
        <tr className="h-7 bg-[#151515] text-[13px] text-white">
          <th className="px-[13px] py-0 font-normal"><span className="flex items-center gap-1"><FaArchive className="size-[13px]" />Thema</span></th>
          {["Autor/in", "Erstellt", "Editiert", "Editor/in"].map((h) => <th key={h} className="px-[13px] py-0 font-normal">{h}</th>)}
        </tr>
      </thead>
      {rows.map((r, i) => (
        <tbody key={r.cells[0]}>
          <tr aria-hidden="true"><td colSpan={5} className={i === 0 ? "h-3 p-0" : "h-4 p-0"} /></tr>
          <tr className="h-7 bg-[#fafad2] text-[12px] text-[#333]">
            {r.cells.map((c, j) => <td key={j} className="px-[13px] py-0">{c}</td>)}
          </tr>
          <tr className="bg-[#151515] align-top text-white">
            <td colSpan={5} className="p-0">
              <div className={r.bonus ? "flex h-[31px] px-[13px]" : "flex h-[45px] px-[13px]"}>
                <div className={r.bonus ? "flex w-[67%] items-center gap-[6px] pb-[2px]" : "flex w-[67%] items-center gap-[6px]"}>{r.tags}</div>
                <div className="flex flex-1 items-start justify-between pt-[5px]">
                  <Actions bonus={r.bonus} />
                  <button type="button" aria-label="Information"><FaInfoCircle className="size-[15px]" /></button>
                </div>
              </div>
            </td>
          </tr>
        </tbody>
      ))}
    </table>
  );
}

function CardsPage() {
  return (
    <div className="flex min-w-0 flex-1 bg-black">
      <main className="relative min-w-0 flex-1 overflow-hidden font-['Liberation_Sans',Arial,sans-serif]">
        <Backdrop />
        <div className="relative flex h-full flex-col">
          <PageHeader />
          <div className="mx-[11%] mt-[90px]">
            <CardsTable />
            <button type="button" className="mt-3 flex h-[26px] w-full items-center justify-center gap-1 rounded-full bg-[#151515] pb-px pl-[114px] text-[13px] text-[#eee]">
              <FaChevronDown className="size-[13px] text-[#2a62cf]" stroke="currentColor" strokeWidth="40" />5 von 331 Karteien
            </button>
          </div>
          <div className="mt-auto flex justify-center pl-4">
            <a href="#code" className="relative flex h-[38px] w-[76px] flex-col items-center font-['Noto_Sans','Open_Sans',sans-serif] text-white">
              <svg viewBox="0 0 75 38" preserveAspectRatio="none" className="absolute inset-0 size-full" aria-hidden="true">
                <path d="M0 38V16q0-3 3-4.500L33 1q4.500-1.500 9 0l30 10.500q3 1.500 3 4.500v22z" fill="#17958a" />
                <path d="M32 8 19 14l13 6M44 8l13 6-13 6M42 4l-8 20" fill="none" stroke="#fff" strokeWidth="2.200" />
              </svg>
              <span className="relative mt-[22px] text-[13px] leading-4">Code</span>
            </a>
          </div>
        </div>
      </main>
      <div className="flex w-2 shrink-0 flex-col bg-[#222]" aria-hidden="true">
        <div className="h-[686px] rounded-b-full bg-[#ff8c00]" />
        <div className="flex-1 rounded-full border border-[#555] bg-[#1c1c1c]" />
      </div>
    </div>
  );
}

function DownloadBar() {
  return (
    <footer className="flex h-[51px] shrink-0 items-center border-t border-[#2a2a2a] bg-[#3c3c3c] text-[13px] text-[#e2e2e2]">
      <div className="flex h-10 w-[197px] items-center border-r border-[#2a2a2a] pl-[17px]">
        <svg viewBox="0 0 12 14" className="mr-[13px] h-[14px] w-3" aria-hidden="true"><rect width="12" height="14" rx="1.500" fill="#d3213f" /><path d="M2.500 11Q6 7 6 3q1 5 4 5.500-4-.5-7.500 2.500z" fill="none" stroke="#fff" strokeWidth=".9" /></svg>
        <a href="#download" className="w-[128px] whitespace-nowrap">Umsatzdetail….pdf</a>
        <button type="button" aria-label="Optionen"><MdKeyboardArrowUp className="size-[14px]" /></button>
      </div>
      <button type="button" className="ml-auto h-[26px] rounded-[3px] border border-[#272727] bg-[#444] px-3 text-[12px] font-semibold whitespace-nowrap">Alle anzeigen</button>
      <button type="button" aria-label="Leiste schließen" className="mx-[9px]"><MdClose className="size-3 text-[#bbb]" /></button>
    </footer>
  );
}

export default function App() {
  return (
    <div className="flex min-h-screen flex-col bg-[#1d1d1d] font-['Noto_Sans','Open_Sans',sans-serif]">
      <TopBar />
      <div className="flex flex-1">
        <Dock />
        <div className="flex min-w-0 flex-1 flex-col">
          <TabStrip />
          <Toolbar />
          <BookmarkBar />
          <div className="flex flex-1">
            <WaveSidebar />
            <CardsPage />
          </div>
          <DownloadBar />
        </div>
      </div>
    </div>
  );
}
